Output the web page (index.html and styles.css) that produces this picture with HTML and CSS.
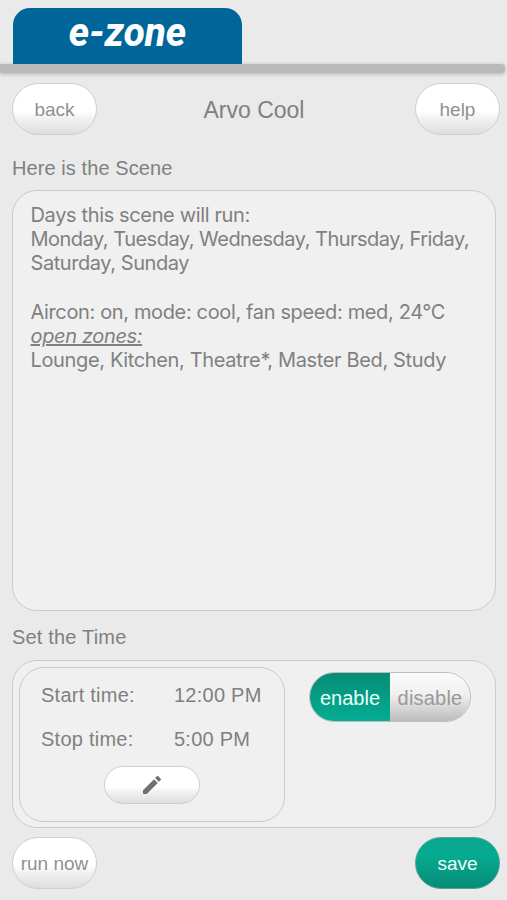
FILE: index.html
```html
<!DOCTYPE html>
<html lang="en">
<head>
<meta charset="utf-8">
<title>e-zone – Arvo Cool</title>
<link rel="stylesheet" href="styles.css">
</head>
<body>
<header class="header">
  <div class="tab"><span class="logo">e-zone</span></div>
</header>
<div class="divider"></div>
<main class="main">
  <div class="row">
    <button class="btn">back</button>
    <h1 class="title">Arvo Cool</h1>
    <button class="btn">help</button>
  </div>
  <h2 class="label">Here is the Scene</h2>
  <section class="panel scene">
    <p class="line">Days this scene will run:</p>
    <p class="line days">Monday, Tuesday, Wednesday, Thursday, Friday,</p>
    <p class="line last-days">Saturday, Sunday</p>
    <p class="line gap">Aircon: on, mode: cool, fan speed: med, 24°C</p>
    <p class="line"><em class="zones">open zones:</em></p>
    <p class="line">Lounge, Kitchen, Theatre*, Master Bed, Study</p>
  </section>
  <h2 class="label time-label">Set the Time</h2>
  <section class="panel time">
    <div class="panel schedule">
      <dl class="times">
        <dt>Start time:</dt><dd>12:00 PM</dd>
        <dt>Stop time:</dt><dd>5:00 PM</dd>
      </dl>
      <button class="btn edit" aria-label="edit">
        <svg class="pencil" viewBox="3 3 18 18"><path d="M3 17.25V20.2q0 .8.8.8H6.75L17.8 9.94l-3.75-3.75zM20.7 7.04a1 1 0 0 0 0-1.41l-2.34-2.34a1 1 0 0 0-1.41 0l-1.83 1.83 3.75 3.75z"/></svg>
      </button>
    </div>
    <div class="toggle">
      <button class="half on">enable</button>
      <button class="half off">disable</button>
    </div>
  </section>
  <div class="row bottom">
    <button class="btn">run now</button>
    <button class="btn save">save</button>
  </div>
</main>
</body>
</html>
```
FILE: styles.css
```css
* { box-sizing: border-box; margin: 0; padding: 0; }
body {
  width: 507px;
  height: 900px;
  overflow: hidden;
  background: #eaeaea;
  color: #808080;
  font-family: "Liberation Sans", Arial, sans-serif;
}
button { font: inherit; color: inherit; border: 0; }
.header { height: 64px; padding: 8px 0 0 13px; }
.tab {
  width: 229px;
  height: 56px;
  display: flex;
  justify-content: center;
  background: #006699;
  border-radius: 17px 17px 0 0;
}
.logo {
  color: #fff;
  font: italic 800 41px/49px Roboto, sans-serif;
  transform: scaleX(.94);
}
.divider {
  height: 9px;
  margin: 0 2px 0 0;
  background: #bababa;
  border-radius: 0 4px 4px 0;
  box-shadow: 0 1px 4px #b0b0b0;
}
.main { padding: 10px 7px 0 12px; }
.tab { position: relative; z-index: 1; }
.row { display: flex; justify-content: space-between; align-items: center; height: 52px; }
.btn {
  width: 85px;
  height: 52px;
  padding-top: 1px;
  border: 1px solid #cfcfcf;
  border-radius: 26px;
  background: linear-gradient(#fff 0%, #fff 55%, #f2f2f2 68%, #dedede 100%);
  color: #909090;
  font-size: 19px;
}
.title { margin-left: -4px; padding-top: 2px; font-size: 23px; font-weight: 400; }
.label { height: 55px; padding-top: 7px; font-size: 20px; font-weight: 400; line-height: 52px; letter-spacing: .08px; }
.panel { border: 1px solid #cbcbcb; border-radius: 25px; background: #f0f0f0; }
.scene { width: 484px; height: 421px; padding: 12px 0 0 17.5px; font-family: Inter, sans-serif; font-size: 20px; }
.line { height: 24.2px; line-height: 24.2px; letter-spacing: -.36px; white-space: nowrap; }
.days { letter-spacing: -.51px; }
.last-days { letter-spacing: -.43px; }
.gap { margin-top: 24.2px; }
.zones { text-decoration: underline; }
.time-label { height: 49px; padding: 0; letter-spacing: .18px; }
.time { width: 484px; height: 168px; display: flex; padding: 6px; }
.schedule { width: 266px; height: 155px; display: flex; flex-direction: column; align-items: center; }
.times {
  width: 100%;
  padding: 6px 0 0 21px;
  display: grid;
  grid-template-columns: 133px 1fr;
  grid-auto-rows: 43.5px;
  font-size: 20px;
  line-height: 43px;
  letter-spacing: .25px;
}
.edit { width: 96px; height: 38px; margin-top: 5px; padding: 0; display: flex; align-items: center; justify-content: center; }
.pencil { width: 18px; height: 18px; fill: #707070; }
.toggle {
  width: 162px;
  height: 50px;
  margin: 5px 0 0 24px;
  display: flex;
  border: 1px solid #bdbdbd;
  border-radius: 25px;
  overflow: hidden;
}
.half { width: 80px; padding-top: 2px; font-size: 20px; }
.on { background: linear-gradient(#078c77, #04ad93); color: #e8fff9; }
.off { background: linear-gradient(#fbfbfb 0%, #f0f0f0 45%, #bcbcbc 100%); color: #999; letter-spacing: .2px; }
.bottom { margin-top: 9px; }
.save { border-color: #4aa595; background: linear-gradient(#08a68d, #06ab91 35%, #078b76); color: #f0fffb; }
```
